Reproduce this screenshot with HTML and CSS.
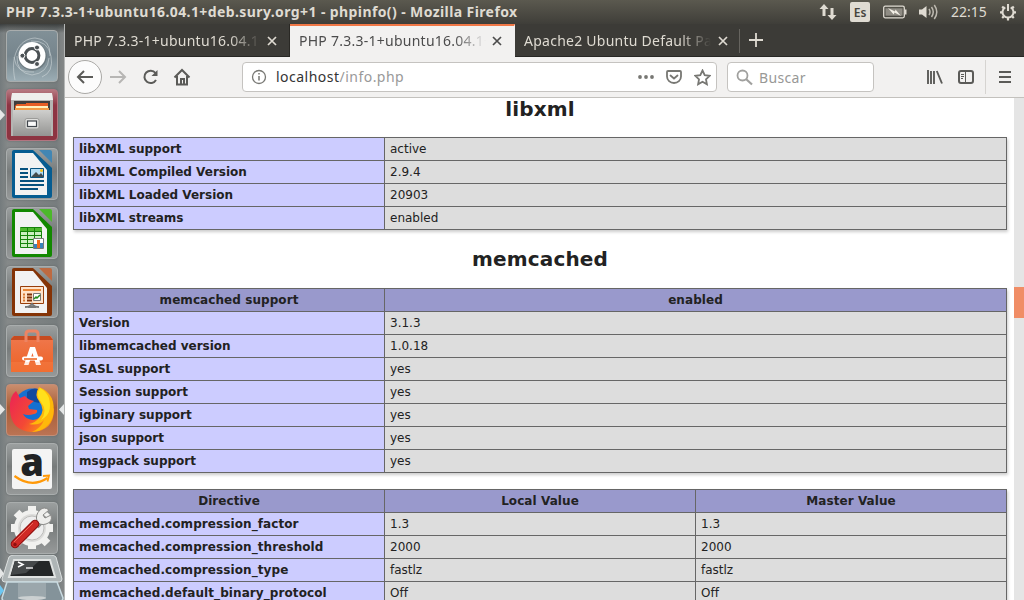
FILE: index.html
```html
<!DOCTYPE html>
<html lang="es">
<head>
<meta charset="utf-8">
<title>phpinfo()</title>
<link rel="stylesheet" href="styles.css">
</head>
<body>
<div class="desktop">
  <header class="panel">
    <span class="window-title">PHP 7.3.3-1+ubuntu16.04.1+deb.sury.org+1 - phpinfo() - Mozilla Firefox</span>
    <div class="indicators">
      <svg class="ind-net" width="18" height="18" viewBox="0 0 18 18" fill="#dfdbd2"><path d="M5 1 9.500 6H6.500v7h-3V6H.5zM13 17 8.500 12h3V5h3v7h3z"/></svg>
      <span class="keyboard">Es</span>
      <svg class="ind-battery" width="24" height="14" viewBox="0 0 24 14"><rect x=".7" y="1.200" width="20.600" height="11.600" rx="1.500" fill="none" stroke="#dfdbd2" stroke-width="1.300"/><path d="M2.500 3.300h17v7.400h-17z" fill="#8f8c84"/><path d="M22 4.500h1.500v5H22z" fill="#dfdbd2"/><path d="m5 3 7 3.500.5-2L18 11l-6.500-3.500-.8 2z" fill="#f3efe6"/></svg>
      <svg class="ind-sound" width="21" height="18" viewBox="0 0 21 18"><path d="M1 6.500h3L8.500 3v12L4 11.500H1z" fill="#dfdbd2"/><path d="M11 6q2 3 0 6M13.500 4q3.500 5 0 10M16.300 2q5 7 0 14" fill="none" stroke="#bdb9b0" stroke-width="1.500"/></svg>
      <span class="clock">22:15</span>
      <svg class="ind-power" width="18" height="18" viewBox="0 0 18 18" fill="none" stroke="#dfdbd2"><path d="M6.300 4.300a5.500 5.500 0 1 0 5.400 0" stroke-width="2"/><path d="M9 1v7" stroke-width="2"/><path d="M1 9.300h2M15 9.300h2M9 15v2.500M3.200 3.500l1.600 1.600M14.800 3.500l-1.600 1.600M3.200 15l1.600-1.600M14.800 15l-1.600-1.600" stroke-width="2.200"/></svg>
    </div>
  </header>
  <div class="workspace">
    <nav class="launcher">
      <div class="tile tile-dash"><svg viewBox="0 0 52 52"><g fill="none" stroke="#d5dcde" stroke-width="1" opacity=".55"><path d="M9 50C4 27 12 9 29 8q16 1 15 18M43 28q-1 15-17 17Q10 43 11 26M25 11q17-1 20 15T36 47M28 42Q10 44 8 27"/></g><circle cx="26.500" cy="26.500" r="14.200" fill="#5d686c" opacity=".55"/><circle cx="26" cy="25.500" r="13.500" fill="#fff"/><circle cx="26" cy="25.500" r="6.900" fill="none" stroke="#4b5154" stroke-width="3"/><g stroke="#fff" fill="#4b5154"><circle cx="16.400" cy="25.700" r="2.500"/><circle cx="31" cy="17.500" r="2.500"/><circle cx="31" cy="34" r="2.500"/></g></svg></div>
      <div class="tile tile-files"><svg viewBox="0 0 52 52"><path d="M6 5h40l1 5v37H5V10z" fill="#b5b5b3"/><path d="M6 4h40l1 7H5z" fill="#eeeeec"/><path d="M8 12h36v10H8z" fill="#3f3d3c"/><path d="M9 17l2-2h9v-1h22v8H9z" fill="#e65e25"/><path d="M10 17h32v2H10z" fill="#fff1bd"/><path d="M9 19h34v2H9z" fill="#f29b45"/><path d="M7 21h38v26H7z" fill="url(#drawer)"/><rect x="19" y="29.500" width="14" height="10.500" rx="2" fill="#dededc" stroke="#9b9b99"/><rect x="21.500" y="32" width="9" height="5.500" fill="#fafafa" stroke="#40454b" stroke-width="1.200"/><defs><linearGradient id="drawer" x2="0" y2="1"><stop stop-color="#cfcfcd"/><stop offset="1" stop-color="#949492"/></linearGradient></defs></svg></div>
      <div class="tile tile-office"><svg viewBox="0 0 52 52"><path d="M8 2h19l19 18v28q0 2-2 2H8q-2 0-2-2V4q0-2 2-2z" fill="#055c91"/><path d="M9 5h18l14 17v25H9z" fill="#f2f2f2"/><path d="M33 2h11q2 0 2 2v11z" fill="#4286b3"/><path d="M14 21h8M14 25h8M14 29h8M14 33h24M14 37h24M14 41h18" stroke="#07527f" stroke-width="2"/><path d="M24.500 20.500h13v9h-13z" fill="#b5ddf5" stroke="#07527f"/><path d="m25 29 5-5 3 3 2-2 3 4z" fill="#434b4e"/><circle cx="35.500" cy="22.500" r="1.500" fill="#f4c01b"/></svg></div>
      <div class="tile tile-office"><svg viewBox="0 0 52 52"><path d="M8 2h19l19 18v28q0 2-2 2H8q-2 0-2-2V4q0-2 2-2z" fill="#128800"/><path d="M9 5h18l14 17v25H9z" fill="#f2f2f2"/><path d="M33 2h11q2 0 2 2v11z" fill="#4cb82b"/><path d="M14.500 20.500h21v20h-21z" fill="#ccefc0" stroke="#158309"/><path d="M14 21h22v3H14z" fill="#4fb82f"/><path d="M14 24.500h22M14 28.500h22M14 32.500h22M14 36.500h22M21.500 20v20M28.500 20v20" stroke="#158309"/><path d="M27.500 31.500h10v10h-10z" fill="#fff" stroke="#777"/><path d="M28 37h3v4h-3z" fill="#3983bd"/><path d="M31 33h3v8h-3z" fill="#f16b1b"/><path d="M34 36h3v5h-3z" fill="#3983bd"/></svg></div>
      <div class="tile tile-office"><svg viewBox="0 0 52 52"><path d="M8 2h19l19 18v28q0 2-2 2H8q-2 0-2-2V4q0-2 2-2z" fill="#843306"/><path d="M9 5h18l14 17v25H9z" fill="#f2f2f2"/><path d="M33 2h11q2 0 2 2v11z" fill="#bd6a41"/><path d="M14.500 20.500h23v17h-23z" fill="#ffe3ca" stroke="#983d09"/><path d="M17 24h18" stroke="#e98636" stroke-width="2"/><path d="M17 28.500h2M17 31.500h2M17 34.500h2" stroke="#d97931" stroke-width="2"/><path d="M21 28.500h5M21 31.500h5M21 34.500h5" stroke="#813207" stroke-width="2"/><path d="M27.500 27.500h7v7h-7z" fill="#fff" stroke="#777"/><path d="m28 33 2-2 1 1 3-3" fill="none" stroke="#258d1b" stroke-width="1.500"/><path d="M19 41q5 0 7-3 2 3 7 3M22 41h8" fill="none" stroke="#777" stroke-width="2"/></svg></div>
      <div class="tile tile-software"><svg viewBox="0 0 52 52"><path d="M7 11h38l2 4v32H5V15z" fill="url(#bag)"/><path d="M5 14 8 11h36l3 4H5z" fill="#c64b20"/><path d="M20 17V9q0-3 3-3h6q3 0 3 3v8" fill="none" stroke="#ed8463" stroke-width="3"/><path d="M18 40 24 22h5l6 18h-5l-3.500-12L22.500 40z" fill="#fff"/><path d="M18 33.500h17" stroke="#fff" stroke-width="4" stroke-linecap="round"/><path d="M18 34h13" stroke="#ef6b29" stroke-width="1.600"/><path d="M5 37h42v10H5z" fill="#ff9b62" opacity=".22"/><defs><linearGradient id="bag" x2="0" y2="1"><stop stop-color="#ef784e"/><stop offset="1" stop-color="#ed6224"/></linearGradient></defs></svg></div>
      <div class="tile tile-firefox"><svg viewBox="0 0 52 52"><circle cx="26.500" cy="23" r="18.500" fill="#1470d1"/><path d="M21 8q9-8 17 2l-5 9-12-3z" fill="#12499d"/><path d="M10 7Q3 12 4 26q1 21 22 22 22-1 22-23l-8-9q1 18-13 20-8-1-10-6 5 2 11 0 4-1 3-4l-8-1-1-3 6-5q-6-1-9-5l-5 2z" fill="url(#fox)"/><path d="M33 3q-5 8 0 14 7 9 0 17-4 5-10 6 10 2 15-4-3 8-12 12 16-1 21-16Q51 10 33 3z" fill="#ffb80a"/><path d="M34 4q-5 7 1 14 7 9 0 18 12-6 8-22Q40 7 34 4z" fill="#ffe01c"/><defs><linearGradient id="fox" x1="0" y1=".2" x2="1" y2=".8"><stop stop-color="#ed2851"/><stop offset=".5" stop-color="#f34935"/><stop offset="1" stop-color="#ffa60b"/></linearGradient></defs></svg></div>
      <div class="tile tile-amazon"><svg viewBox="0 0 52 52"><rect x="6" y="6" width="40" height="40" rx="2" fill="#f4f4f4"/><text class="amazon-a" x="26" y="33" text-anchor="middle">a</text><path d="M8.500 33q17 12.500 33 2" fill="none" stroke="#ff9908" stroke-width="2.200"/><path d="m37 33 6-.5-1.500 6" fill="none" stroke="#ff9908" stroke-width="1.800"/></svg></div>
      <div class="tile tile-settings"><svg viewBox="0 0 52 52"><g fill="none" stroke="#f1f1ef"><circle cx="26" cy="26" r="15" stroke-width="6"/><path d="M26 4v7M26 41v6M5 26h7M40 26h7M10.500 10.500l5 5M36 36l5.500 5.500M10.500 41.500l5-5M41.500 10.500l-5 5" stroke-width="8"/></g><circle cx="26" cy="26" r="14" fill="#dcdcda"/><circle cx="26" cy="26" r="12" fill="#eee" stroke="#bdbdbb"/><path d="M30 24 39 14" stroke="#878a87" stroke-width="7"/><path d="M34 8q4-4 9 0l-6 5 2 3 6-3q2 7-5 9-6 2-9-3-2-6 3-11z" fill="#eeeeec" stroke="#8a8a88"/><path d="M9 42 29 22" stroke="#8e1010" stroke-width="8.500" stroke-linecap="round"/><path d="M9 42 29 22" stroke="#cf2925" stroke-width="6.500" stroke-linecap="round"/><path d="M8 40 27 21" stroke="#ee6a5c"/><circle cx="9" cy="42.500" r="1.700" fill="#8b1111"/></svg></div>
      <div class="terminal"><svg viewBox="0 0 64 46"><path d="M9 2q2-2 5-2h37q3 0 5 2l6 22q0 3-3 3H5q-3 0-3-3z" fill="#aeb5b6" stroke="#dce0e0"/><path d="M14 5h36l5 17H9z" fill="#242728" stroke="#e0e3e2" stroke-width="2"/><path d="M15 6h24L26 18l-15 2z" fill="#45494a"/><path d="m18 7 5 2.500-5 2.500" fill="none" stroke="#fff" stroke-width="1.500"/><path d="M26 13h7" stroke="#fff" stroke-width="1.300"/><path d="M7 27h50l6 16q0 3-3 3H5q-3 0-3-3z" fill="#84939a" stroke="#c9dbe1" stroke-width="1.500"/><path d="M18 28h28v15H18z" fill="#9ba7ac"/><ellipse cx="32" cy="43" rx="14" ry="2" fill="#cbd0d1"/></svg></div>
      <svg class="pips" width="64" height="576" viewBox="0 0 64 576" fill="#e5e7e7"><path d="M0 85.500 5 91 0 96.500zM0 380l5 5.500-5 5.500zM64 380l-5 5.500 5 5.500zM0 544l4 5.500-4 5.500z"/><path d="M0 561l4 5.500-4 5.500z" fill="#6cc7f2"/></svg>
    </nav>
    <main class="browser">
      <div class="tabs">
        <div class="tab"><span class="tab-label">PHP 7.3.3-1+ubuntu16.04.1+</span><svg class="close" viewBox="0 0 10 10"><path d="m1 1 8 8m0-8L1 9"/></svg></div>
        <div class="tab active"><span class="tab-label">PHP 7.3.3-1+ubuntu16.04.1+</span><svg class="close" viewBox="0 0 10 10"><path d="m1 1 8 8m0-8L1 9"/></svg></div>
        <div class="tab last"><span class="tab-label">Apache2 Ubuntu Default Page</span><svg class="close" viewBox="0 0 10 10"><path d="m1 1 8 8m0-8L1 9"/></svg></div>
        <svg class="new-tab" viewBox="0 0 14 14"><path d="M7 0v14M0 7h14"/></svg>
      </div>
      <div class="toolbar">
        <span class="back"><svg width="18" height="16" viewBox="0 0 18 16"><path d="M17 8H2M8 2 2 8l6 6"/></svg></span>
        <svg class="forward" width="18" height="16" viewBox="0 0 18 16"><path d="M1 8h15M10 2l6 6-6 6"/></svg>
        <svg class="reload" width="18" height="18" viewBox="0 0 18 18"><path d="M14.500 5A6.200 6.200 0 1 0 15 12" fill="none" stroke="#5b5b58" stroke-width="2"/><path d="M16.500 2v6h-6z" fill="#5b5b58"/></svg>
        <svg class="home" width="18" height="18" viewBox="0 0 18 18"><path d="M1.500 9.500 9 2l7.500 7.500M4 8v8.500h10V8M8 16v-5h3v5" fill="none" stroke="#5b5b58" stroke-width="2"/></svg>
        <div class="address">
          <svg width="16" height="16" viewBox="0 0 16 16"><circle cx="8" cy="8" r="6.500" fill="none" stroke="#777773" stroke-width="1.300"/><path d="M8 7v4.500M8 4v1.500" stroke="#777773" stroke-width="1.500"/></svg>
          <span class="url"><b class="host">localhost</b>/info.php</span>
          <svg class="dots" width="16" height="4" viewBox="0 0 16 4" fill="#777773"><circle cx="2" cy="2" r="1.900"/><circle cx="8" cy="2" r="1.900"/><circle cx="14" cy="2" r="1.900"/></svg>
          <svg class="pocket" width="16" height="16" viewBox="0 0 16 16" fill="none" stroke="#777773" stroke-width="1.800"><path d="M2 2h12q1 0 1 1v4.500a7 6.500 0 0 1-14 0V3q0-1 1-1z"/><path d="m4.500 6.500 3.500 3 3.500-3" stroke-linecap="round"/></svg>
          <svg class="star" width="17" height="17" viewBox="0 0 17 17"><path d="m8.500 1.500 2.200 4.700 5 .6-3.700 3.500.9 5-4.400-2.500-4.400 2.500.9-5L1.300 6.800l5-.6z" fill="none" stroke="#777773" stroke-width="1.800"/></svg>
        </div>
        <div class="search"><svg width="17" height="17" viewBox="0 0 17 17"><circle cx="6.500" cy="6.500" r="5" fill="none" stroke="#a0a09e" stroke-width="1.800"/><path d="m10 10 6 5.500" stroke="#a0a09e" stroke-width="2.200"/></svg><span>Buscar</span></div>
        <svg class="library" width="16" height="14" viewBox="0 0 16 14"><path d="M1 0v14M4 1v13M7 1v13M9.800 1 15 13.500" stroke="#5b5b58" stroke-width="1.900"/></svg>
        <svg class="sidebar" width="16" height="14" viewBox="0 0 16 14"><rect x="1" y="1" width="14" height="12" rx="2" fill="none" stroke="#5b5b58" stroke-width="2"/><path d="M7.500 1v12M3 4.500h3M3 6.500h3M3 8.500h2" stroke="#5b5b58"/></svg>
        <span class="separator"></span>
        <svg class="menu" width="12" height="12" viewBox="0 0 12 12"><path d="M0 1h12M0 6h12M0 11h12" stroke="#5b5b58" stroke-width="2"/></svg>
      </div>
      <div class="viewport">
        <article class="page">
          <h2>libxml</h2>
          <table>
            <colgroup><col class="key"><col></colgroup>
            <tr><td class="e">libXML support</td><td class="v">active</td></tr>
            <tr><td class="e">libXML Compiled Version</td><td class="v">2.9.4</td></tr>
            <tr><td class="e">libXML Loaded Version</td><td class="v">20903</td></tr>
            <tr><td class="e">libXML streams</td><td class="v">enabled</td></tr>
          </table>
          <h2>memcached</h2>
          <table>
            <colgroup><col class="key"><col></colgroup>
            <tr><th>memcached support</th><th>enabled</th></tr>
            <tr><td class="e">Version</td><td class="v">3.1.3</td></tr>
            <tr><td class="e">libmemcached version</td><td class="v">1.0.18</td></tr>
            <tr><td class="e">SASL support</td><td class="v">yes</td></tr>
            <tr><td class="e">Session support</td><td class="v">yes</td></tr>
            <tr><td class="e">igbinary support</td><td class="v">yes</td></tr>
            <tr><td class="e">json support</td><td class="v">yes</td></tr>
            <tr><td class="e">msgpack support</td><td class="v">yes</td></tr>
          </table>
          <table class="directives">
            <colgroup><col class="key"><col class="key"><col></colgroup>
            <tr><th>Directive</th><th>Local Value</th><th>Master Value</th></tr>
            <tr><td class="e">memcached.compression_factor</td><td class="v">1.3</td><td class="v">1.3</td></tr>
            <tr><td class="e">memcached.compression_threshold</td><td class="v">2000</td><td class="v">2000</td></tr>
            <tr><td class="e">memcached.compression_type</td><td class="v">fastlz</td><td class="v">fastlz</td></tr>
            <tr><td class="e">memcached.default_binary_protocol</td><td class="v">Off</td><td class="v">Off</td></tr>
          </table>
        </article>
        <div class="scrollbar"><div class="thumb"></div></div>
      </div>
    </main>
  </div>
</div>
</body>
</html>
```
FILE: styles.css
```css
* { box-sizing: border-box; }
body { margin: 0; font-family: "Noto Sans", sans-serif; }
svg { display: block; flex: none; }
.desktop { width: 1024px; height: 600px; overflow: hidden; display: flex; flex-direction: column; }
.panel { height: 24px; flex: none; display: flex; align-items: center; justify-content: space-between; padding: 0 7px 0 6px; background: linear-gradient(#5b594f, #3f3e39); color: #dfdbd2; }
.window-title { font-size: 14px; font-weight: 700; letter-spacing: .4px; white-space: nowrap; line-height: 24px; }
.indicators { display: flex; align-items: center; height: 24px; }
.keyboard { margin-left: 13px; width: 20px; height: 20px; border-radius: 2px; background: #dfdbd2; color: #45433d; font-size: 12px; font-weight: 600; line-height: 21px; text-align: center; }
.ind-battery { margin-left: 13px; }
.ind-sound { margin-left: 11px; }
.clock { margin-left: 12px; width: 37px; font-size: 14px; line-height: 24px; white-space: nowrap; }
.ind-power { margin-left: 11px; }
.workspace { flex: 1; min-height: 0; display: flex; }
.launcher { position: relative; width: 65px; flex: none; padding: 6px 0 0 6px; display: flex; flex-direction: column; gap: 7px; border-right: 1px solid #b4b6b5; background: linear-gradient(rgba(35,37,36,.7), transparent 9px), linear-gradient(90deg, #747b7d, #858989 12%, #777d7e 88%, #848787); overflow: hidden; }
.tile { width: 52px; height: 52px; flex: none; border: 1px solid #a9adad; border-radius: 4px; background: linear-gradient(#9b9f9f, #777b7b 45%, #969999); box-shadow: 0 0 2px #606667; }
.tile svg { width: 52px; height: 52px; margin: -1px; }
.tile-dash { background: linear-gradient(#819097, #76858d 50%, #9badb4); }
.tile-files { background: linear-gradient(#b67880, #8d3443 30%, #8d3441); border-color: #b37580; }
.tile-firefox { background: linear-gradient(#ca8d6d, #a75d37 45%, #bb7353); border-color: #c48e77; }
.amazon-a { font: 800 38px "Open Sans", sans-serif; fill: #202224; }
.terminal { width: 64px; height: 46px; flex: none; margin: -6px 0 0 -6px; }
.pips { position: absolute; left: 0; top: 0; }
.browser { flex: 1; min-width: 0; display: flex; flex-direction: column; }
.tabs { height: 33px; flex: none; display: flex; background: #3c3b37; border-bottom: 1px solid #272724; }
.tab { width: 225px; height: 33px; flex: none; display: flex; align-items: center; justify-content: space-between; padding: 0 12px 0 9px; color: #dfdbd2; border-right: 1px solid #292824; }
.tab.active { background: #f2f1f0; color: #4c4c4c; border-top: 2px solid #f07746; border-right-color: #f2f1f0; padding-bottom: 2px; }
.tab.last { border-right: 0; background: linear-gradient(#66645f, #66645f) right 5px / 1px 24px no-repeat; }
.tab-label { width: 187px; font-size: 14px; letter-spacing: .25px; line-height: 20px; white-space: nowrap; overflow: hidden; -webkit-mask-image: linear-gradient(90deg, #000 155px, transparent 187px); mask-image: linear-gradient(90deg, #000 155px, transparent 187px); }
.close { width: 10px; height: 10px; fill: none; stroke: currentColor; stroke-width: 1.7; }
.new-tab { width: 14px; height: 14px; margin: 9px 0 0 9px; fill: none; stroke: #dfdbd2; stroke-width: 1.8; }
.toolbar { height: 41px; flex: none; display: flex; align-items: center; padding-left: 3px; background: #f2f1f0; border-bottom: 1px solid #c3c1bd; }
.back { width: 34px; height: 34px; border: 1px solid #aaa9a6; border-radius: 50%; background: #fcfcfc; display: flex; align-items: center; justify-content: center; }
.back svg, .forward { fill: none; stroke: #5b5b58; stroke-width: 2; }
.forward { margin-left: 7px; stroke: #b7b6b4; }
.reload { margin-left: 14px; }
.home { margin-left: 14px; }
.address { width: 475px; height: 30px; margin-left: 51px; display: flex; align-items: center; padding: 0 5px 0 8px; border: 1px solid #c5c3c0; border-radius: 4px; background: #fff; }
.url { flex: 1; margin-left: 9px; font-size: 14px; letter-spacing: .48px; line-height: 20px; color: #999; }
.host { font-weight: 400; color: #333; }
.pocket { margin-left: 12px; }
.star { margin-left: 12px; }
.search { width: 147px; height: 30px; margin-left: 10px; display: flex; align-items: center; padding-left: 8px; border: 1px solid #c5c3c0; border-radius: 4px; background: #fff; color: #989896; font-size: 14px; letter-spacing: .35px; }
.search span { margin-left: 6px; }
.library { margin-left: 53px; }
.sidebar { margin-left: 15px; }
.separator { width: 1px; height: 34px; margin-left: 11px; background: #d6d4d1; }
.menu { margin-left: 13px; }
.viewport { flex: 1; min-height: 0; display: flex; background: #fff; overflow: hidden; }
.page { width: 949px; flex: none; padding: 0 7px 0 8px; color: #222; font-family: "DejaVu Sans", sans-serif; font-size: 12px; line-height: 14px; }
h2 { margin: 17px 0; font-size: 20px; line-height: 24px; letter-spacing: .15px; text-align: center; }
h2:first-child { margin: -1px 0 16px; }
table { width: 934px; table-layout: fixed; border-collapse: collapse; box-shadow: 1px 2px 3px #ccc; }
.key { width: 311px; }
td, th { height: 23px; padding: 4px 5px; border: 1px solid #666; }
.e { background: #ccf; font-weight: 700; }
.v { background: #ddd; }
th { background: #99c; text-align: center; letter-spacing: .07px; }
.directives { margin-top: 16px; }
.directives .e { letter-spacing: .08px; }
.scrollbar { width: 10px; background: #e5e5e5; padding-top: 189px; }
.thumb { height: 31px; background: #f08d66; }
```
